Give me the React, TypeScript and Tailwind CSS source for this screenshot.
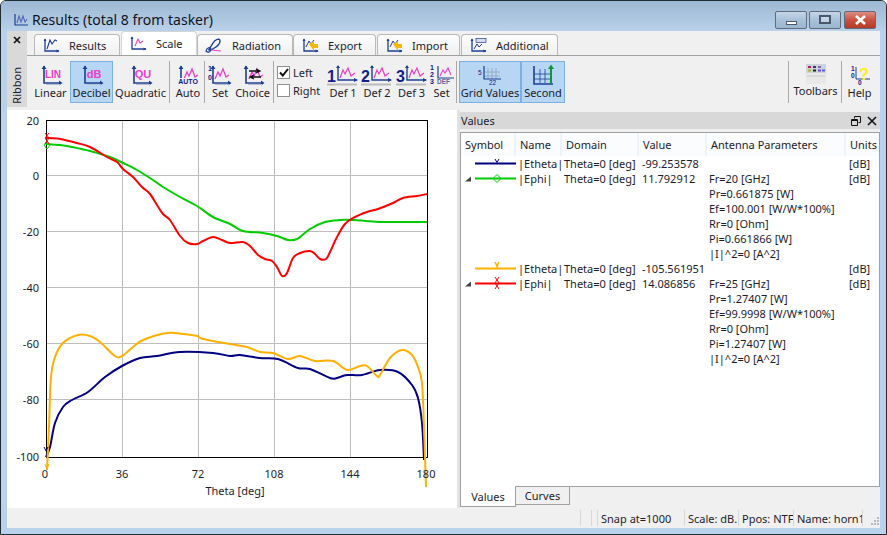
import type { ReactNode } from 'react'

const NAVY = '#1c3f94'
const PINK = '#e83ec8'

const RED = '46,138 60,139 77,143 90,147 107,157 117,162 123,169 133,177 142,187 150,194 157,205 163,214 170,220 180,236 188,243 197,244 203,241 213,237 222,240 230,243 243,242 250,246 258,255 265,259 272,261 277,267 282,276 287,273 293,258 300,253 310,251 315,254 320,259 326,259 330,252 337,237 345,224 355,217 367,212 378,209 393,203 403,198 417,196 427,194'
const GREEN = '46,144 60,145 72,147 90,151 110,157 123,163 137,170 153,180 163,187 180,197 197,206 213,217 230,224 243,231 263,233 277,236 288,240 297,239 310,229 325,222 340,220 353,220 366,221 380,222 400,222 427,222'
const ORANGE = '47,470 48,450 49,427 51,377 55,357 63,343 78,335 90,336 100,342 115,356 122,356 133,347 143,340 167,333 183,334 197,336 203,339 230,344 247,347 260,352 273,353 288,359 300,356 315,361 333,361 347,370 360,366 367,366 377,376 380,375 390,358 402,350 412,355 418,367 422,383 424,427 426,487'
const BLUE = '46,457 50,447 55,423 63,407 72,400 88,392 105,377 122,366 140,358 157,356 180,352 213,353 230,356 240,355 260,358 278,359 298,368 310,369 330,378 337,378 347,375 362,375 380,370 398,372 412,385 418,398 422,423 424,460'

// catmull-rom through the sampled points so the curves don't look like polygons
function smooth(points: string) {
  const p = points.split(' ').map(s => s.split(',').map(Number))
  let d = `M${p[0][0]} ${p[0][1]}`
  for (let i = 0; i < p.length - 1; i++) {
    const a = p[i - 1] ?? p[i]
    const b = p[i]
    const c = p[i + 1]
    const e = p[i + 2] ?? c
    const c1 = [b[0] + (c[0] - a[0]) / 6, b[1] + (c[1] - a[1]) / 6]
    const c2 = [c[0] - (e[0] - b[0]) / 6, c[1] - (e[1] - b[1]) / 6]
    d += `C${c1[0]} ${c1[1]} ${c2[0]} ${c2[1]} ${c[0]} ${c[1]}`
  }
  return d
}

// base graph used by nearly all ribbon icons
function Axes({ children, w = 24 }: { children?: ReactNode; w?: number }) {
  return (
    <svg width={w} height={22} viewBox={`0 0 ${w} 22`} className="shrink-0">
      <path d={`M5 2V19H${w - 2}`} fill="none" stroke={NAVY} strokeWidth="1.6" />
      <path d={`M2.5 5L5 1.5L7.5 5ZM${w - 4} 16.5L${w - 0.5} 19L${w - 4} 21.5Z`} fill={NAVY} />
      <path d={`M7 20.5H${w - 3}`} stroke="#b5bccb" strokeWidth="1" />
      {children}
    </svg>
  )
}

function Tag({ t, size = 10 }: { t: string; size?: number }) {
  return (
    <text x="14" y="14" textAnchor="middle" fontSize={size} fontWeight="700" fill={PINK} fontFamily="Liberation Sans, sans-serif">{t}</text>
  )
}

const Peak = ({ dx = 0 }: { dx?: number }) => (
  <path d="M7 15L10 8L12 12L15 5L18 13L21 11" transform={`translate(${dx} 0)`} fill="none" stroke={PINK} strokeWidth="1.3" />
)

function DefIcon({ n }: { n: string }) {
  return (
    <svg width="32" height="22" viewBox="0 0 32 22">
      <path d="M11 2V16H30" fill="none" stroke={NAVY} strokeWidth="1.4" />
      <path d="M9 4L11 1L13 4ZM27 14L31 16L27 18Z" fill={NAVY} />
      <path d="M13 14L16 6L18 10L21 4L24 12L28 9" fill="none" stroke={PINK} strokeWidth="1.2" />
      <path d="M0 20.5H30" stroke="#bbbbbb" strokeWidth="2" />
      <text x="0" y="18" fontSize="16" fontWeight="700" fill="#10208a" fontFamily="Liberation Sans, sans-serif">{n}</text>
    </svg>
  )
}

function SmallDigits() {
  return (
    <>
      <text x="0" y="7" fontSize="7" fontWeight="700" fill="#10208a" fontFamily="Liberation Sans, sans-serif">1</text>
      <text x="0" y="16" fontSize="7" fontWeight="700" fill="#10208a" fontFamily="Liberation Sans, sans-serif">0</text>
    </>
  )
}

function ToolButton({ label, icon, w, active }: { label: string; icon: ReactNode; w: number; active?: boolean }) {
  return (
    <div
      style={{ width: w }}
      className={'flex h-[42px] shrink-0 flex-col items-center justify-between border pt-[2px] pb-[4px] ' +
        (active ? 'border-[#7db0e2] bg-[#b6d6f4]' : 'border-transparent')}
    >
      <div className="flex h-[22px] items-start justify-center">{icon}</div>
      <span className="whitespace-nowrap leading-[14px]">{label}</span>
    </div>
  )
}

const Sep = ({ ml, mr }: { ml: string; mr: string }) => (
  <div className={`h-[42px] w-px shrink-0 bg-[#a9a9a9] ${ml} ${mr}`} />
)

function TabIcon({ kind }: { kind: string }) {
  return (
    <svg width="18" height="15" viewBox="0 0 18 15" className="shrink-0">
      <path d="M3 1V13H17" fill="none" stroke={NAVY} strokeWidth="1.3" />
      <path d="M1.5 3L3 0.5L4.5 3ZM14.5 11.5L17.5 13L14.5 14.5Z" fill={NAVY} />
      {kind === 'results' && <path d="M5 11L8 2L10 6L13 2L15 3" fill="none" stroke={NAVY} strokeWidth="1.1" />}
      {kind === 'scale' && <path d="M6 10L9 3L11 7L14 5" fill="none" stroke={PINK} strokeWidth="1.1" />}
      {kind === 'transfer' && (
        <>
          <path d="M5 9L8 3L10 6L13 2" fill="none" stroke={NAVY} strokeWidth="1" />
          <path d="M8 6L13 3V6H17V10H13V13Z" fill="#f2b900" />
        </>
      )}
      {kind === 'additional' && (
        <>
          <rect x="7" y="0.5" width="10" height="4" fill="#d6dcf0" stroke={NAVY} strokeWidth="0.7" />
          <path d="M5 11L8 6L10 9L13 6" fill="none" stroke={NAVY} strokeWidth="1" />
        </>
      )}
    </svg>
  )
}

const RadiationIcon = () => (
  <svg width="18" height="15" viewBox="0 0 18 15" className="shrink-0">
    <path d="M4 12C8 12 15 7 15 3C15 0 10 1 8 5C6 9 3 12 4 12Z" fill="none" stroke={NAVY} strokeWidth="1.4" />
    <path d="M1 13C2 9 5 9 6 11C6 14 3 15 1 13Z" fill="none" stroke={NAVY} strokeWidth="1.2" />
    <path d="M6 12L16 13" stroke={PINK} strokeWidth="1" />
  </svg>
)

function Tab({ label, w, gapTo, active, icon }: { label: string; w: number; gapTo: string; active?: boolean; icon: ReactNode }) {
  return (
    <div
      style={{ width: w }}
      className={`flex shrink-0 items-center gap-[9px] rounded-t-[4px] border border-b-0 pl-[7px] ${gapTo} ` +
        (active ? 'h-[24px] border-[#d4d4d4] bg-white' : 'h-[21px] border-[#b9b9b9] bg-gradient-to-b from-[#fdfdfd] to-[#f0f0f0]')}
    >
      {icon}
      <span className="leading-none">{label}</span>
    </div>
  )
}

function WinButton({ w, red, children }: { w: string; red?: boolean; children: ReactNode }) {
  return (
    <div
      className={`flex h-[18px] ${w} items-center justify-center rounded-[2px] border border-[#5d6b7d] ` +
        (red
          ? 'bg-gradient-to-b from-[#dc8d80] via-[#c9523f] to-[#b33c28]'
          : 'bg-gradient-to-b from-[#c6d6e6] via-[#a8c0d8] to-[#9cb6cf]')}
    >
      {children}
    </div>
  )
}

function Symbol({ color, marker, tree }: { color: string; marker: 'v' | 'd' | 'y' | 'x'; tree?: boolean }) {
  return (
    <svg width="55" height="15" viewBox="0 0 55 15" className="block">
      {tree && <path d="M4 10.5L10 10.5L10 5.5Z" fill="#444444" />}
      <path d="M14 7.5H56" stroke={color} strokeWidth="2" />
      {marker === 'v' && <path d="M34 3L36 6.5L38 3" fill="none" stroke={color} strokeWidth="1" />}
      {marker === 'd' && <path d="M36 3.5L40 7.5L36 11.5L32 7.5Z" fill="none" stroke={color} strokeWidth="1" />}
      {marker === 'y' && <path d="M34 1L36 5L38 1M36 5V7" fill="none" stroke={color} strokeWidth="1.5" />}
      {marker === 'x' && <path d="M34 1L38 7L34 13M38 1L34 7L38 13" fill="none" stroke={color} strokeWidth="1" />}
    </svg>
  )
}

const COLS = 'grid grid-cols-[55px_46px_77px_68px_139px_1fr]'

function Row({ symbol, name, value, params }: { symbol: ReactNode; name: string; value: string; params?: string[] }) {
  return (
    <div className={`${COLS} leading-[15px]`}>
      <div className="h-[15px] overflow-hidden">{symbol}</div>
      <div className="whitespace-nowrap pl-[2px]">{name}</div>
      <div className="whitespace-nowrap pl-[2px]">Theta=0 [deg]</div>
      <div className="whitespace-nowrap pl-[3px]">{value}</div>
      <div className="whitespace-nowrap pl-[2px]">
        {params?.map(p => <div key={p}>{p}</div>)}
      </div>
      <div className="pl-[3px]">[dB]</div>
    </div>
  )
}

function HeadCell({ label, last }: { label: string; last?: boolean }) {
  return (
    <div className={'overflow-hidden pl-[4px] leading-[23px] ' + (last ? '' : 'border-r-2 border-[#eef3f9]')}>{label}</div>
  )
}

function Plot() {
  const vLines = [122, 198, 274, 350]
  const hLines = [175, 231, 287, 343, 399]
  const yLabels: [string, number][] = [['20', 122], ['0', 177], ['-20', 233], ['-40', 289], ['-60', 345], ['-80', 401], ['-100', 458]]
  const xLabels: [string, number][] = [['0', 45], ['36', 122], ['72', 198], ['108', 274], ['144', 350], ['180', 426]]
  return (
    <svg width="450" height="398" viewBox="7 110 450 398" className="block bg-white">
      <g stroke="#bdbdbd" strokeWidth="1" shapeRendering="crispEdges">
        {vLines.map(x => <line key={x} x1={x + 0.5} y1="120" x2={x + 0.5} y2="457" />)}
        {hLines.map(y => <line key={y} x1="46" y1={y + 0.5} x2="427" y2={y + 0.5} />)}
      </g>
      <rect x="46.5" y="120.5" width="381" height="337" fill="none" stroke="#000000" strokeWidth="1" shapeRendering="crispEdges" />
      <path d={smooth(BLUE)} fill="none" stroke="#000080" strokeWidth="2" />
      <path d={smooth(ORANGE)} fill="none" stroke="#ffb000" strokeWidth="2" />
      <path d={smooth(GREEN)} fill="none" stroke="#00cc00" strokeWidth="2" />
      <path d={smooth(RED)} fill="none" stroke="#ff0000" strokeWidth="2" />
      <path d="M47 141L50 145L47 149L44 145Z" fill="none" stroke="#00cc00" strokeWidth="1" />
      <path d="M45 133L49 138L45 144M49 133L45 138L49 144" fill="none" stroke="#ff0000" strokeWidth="1" />
      <path d="M44 447L46 451L48 447" fill="none" stroke="#000080" strokeWidth="1" />
      <path d="M45 464L47 469L49 464" fill="none" stroke="#ffb000" strokeWidth="1" />
      <g fontSize="11" fill="#1c1c2c">
        {yLabels.map(([t, y]) => <text key={t} x="39" y={y + 3} textAnchor="end">{t}</text>)}
        {xLabels.map(([t, x]) => <text key={t} x={x} y="478" textAnchor="middle">{t}</text>)}
        <text x="235" y="495" textAnchor="middle">Theta [deg]</text>
      </g>
    </svg>
  )
}

export default function App() {
  return (
    <div className="flex h-[535px] w-[887px] flex-col overflow-hidden rounded-t-[6px] border border-[#1f2b33] bg-[#b9d1ea] px-[6px] pb-[6px] font-['Noto_Sans',sans-serif] text-[11px] text-[#1c1c2c]">
      {/* title bar */}
      <div className="-mx-[6px] flex h-[30px] shrink-0 items-center bg-gradient-to-b from-[#9db8d3] to-[#b9d1ea] pt-[7px] pr-[10px] pl-[12px]">
        <svg width="16" height="14" viewBox="0 0 16 14" className="mr-[3px] shrink-0">
          <path d="M2 1V12H15" fill="none" stroke={NAVY} strokeWidth="1.2" />
          <path d="M4 10L6 3L8 9L10 3L12 9L14 6" fill="none" stroke="#5566bb" strokeWidth="1.1" />
        </svg>
        <span className="text-[14px] leading-none text-[#10141c]">Results (total 8 from tasker)</span>
        <div className="ml-auto flex items-center gap-[2px]">
          <WinButton w="w-[32px]"><div className="mt-[6px] h-[4px] w-[11px] border border-[#49586a] bg-white" /></WinButton>
          <WinButton w="w-[32px]"><div className="h-[9px] w-[12px] border-2 border-[#49586a] bg-white/30" /></WinButton>
          <div className="ml-[1px]">
            <WinButton w="w-[32px]" red>
              <svg width="13" height="10" viewBox="0 0 13 10"><path d="M2 1L11 9M11 1L2 9" stroke="#ffffff" strokeWidth="2.6" /></svg>
            </WinButton>
          </div>
        </div>
      </div>

      <div className="flex min-h-0 flex-1 flex-col bg-[#f0f0f0]">
        {/* ribbon */}
        <div className="flex h-[76px] shrink-0">
          <div className="flex w-[20px] shrink-0 flex-col items-center bg-[#d9d9d9]">
            <svg width="10" height="10" viewBox="0 0 10 10" className="mt-[4px]"><path d="M2 2L8 8M8 2L2 8" stroke="#111111" strokeWidth="1.7" /></svg>
            <span className="mt-auto mb-[3px] leading-[14px] [writing-mode:vertical-rl] rotate-180">Ribbon</span>
          </div>
          <div className="flex min-w-0 flex-1 flex-col">
            <div className="flex h-[24px] shrink-0 items-end pl-[7px]">
              <Tab label="Results" w={86} gapTo="mr-px" icon={<TabIcon kind="results" />} />
              <Tab label="Scale" w={76} gapTo="" active icon={<TabIcon kind="scale" />} />
              <Tab label="Radiation" w={96} gapTo="" icon={<RadiationIcon />} />
              <Tab label="Export" w={83} gapTo="mr-px" icon={<TabIcon kind="transfer" />} />
              <Tab label="Import" w={83} gapTo="mr-px" icon={<TabIcon kind="transfer" />} />
              <Tab label="Additional" w={97} gapTo="" icon={<TabIcon kind="additional" />} />
            </div>
            <div className="flex h-[52px] items-center border-t border-[#a0a0a0] pl-[6px]">
              <ToolButton w={35} label="Linear" icon={<Axes><Tag t="LIN" /></Axes>} />
              <div className="w-[2px]" />
              <ToolButton w={43} label="Decibel" active icon={<Axes><Tag t="dB" size={11} /></Axes>} />
              <div className="w-[2px]" />
              <ToolButton w={51} label="Quadratic" icon={<Axes><Tag t="QU" size={11} /></Axes>} />
              <Sep ml="ml-[3px]" mr="mr-[3px]" />
              <ToolButton w={30} label="Auto" icon={
                <Axes><Peak dx={1} /><rect x="0" y="14" width="24" height="8" fill="#f0f0f0" /><text x="12" y="20" textAnchor="middle" fontSize="7" fontWeight="700" fill="#10208a" fontFamily="Liberation Sans, sans-serif">AUTO</text></Axes>
              } />
              <Sep ml="ml-px" mr="mr-[2px]" />
              <ToolButton w={26} label="Set" icon={<Axes><SmallDigits /><Peak /></Axes>} />
              <div className="w-[2px]" />
              <ToolButton w={35} label="Choice" icon={
                <Axes><Peak dx={1} /><path d="M8 7H19M15 5L19 7L15 9M20 13H9M13 11L9 13L13 15" fill="none" stroke="#111111" strokeWidth="1.3" /></Axes>
              } />
              <Sep ml="ml-[3px]" mr="mr-[3px]" />
              <div className="flex w-[50px] shrink-0 flex-col gap-[5px]">
                <label className="flex h-[13px] items-center gap-[3px] leading-none">
                  <span className="flex h-[13px] w-[13px] items-center justify-center border border-[#8e8f8f] bg-white">
                    <svg width="10" height="9" viewBox="0 0 10 9"><path d="M1 4.5L3.8 7.5L9 1" fill="none" stroke="#111111" strokeWidth="2" /></svg>
                  </span>
                  Left
                </label>
                <label className="flex h-[13px] items-center gap-[3px] leading-none">
                  <span className="h-[13px] w-[13px] border border-[#8e8f8f] bg-white" />
                  Right
                </label>
              </div>
              <ToolButton w={32} label="Def 1" icon={<DefIcon n="1" />} />
              <ToolButton w={36} label="Def 2" icon={<DefIcon n="2" />} />
              <ToolButton w={33} label="Def 3" icon={<DefIcon n="3" />} />
              <ToolButton w={27} label="Set" icon={
                <svg width="26" height="22" viewBox="0 0 26 22">
                  <path d="M9 2V14H25" fill="none" stroke={NAVY} strokeWidth="1.2" />
                  <path d="M11 12L14 6L16 9L19 4L22 11" fill="none" stroke={PINK} strokeWidth="1.1" />
                  <g fontSize="7" fontWeight="700" fill="#10208a" fontFamily="Liberation Sans, sans-serif">
                    <text x="1" y="6">1</text><text x="1" y="13">2</text><text x="1" y="20">3</text>
                    <text x="8" y="20" fontSize="6.5" fill="#666699">DEF</text>
                  </g>
                </svg>
              } />
              <Sep ml="ml-[1px]" mr="mr-[2px]" />
              <ToolButton w={62} label="Grid Values" active icon={
                <svg width="24" height="22" viewBox="0 0 24 22">
                  <path d="M10 4V15M14 4V15M18 4V15M6 8H22M6 12H22" stroke="#8fa2c0" strokeWidth="0.8" />
                  <path d="M6 2V15H23" fill="none" stroke={NAVY} strokeWidth="1.2" />
                  <text x="0" y="11" fontSize="6.5" fill="#10208a" fontFamily="Liberation Sans, sans-serif">5</text>
                  <text x="11" y="21" fontSize="6.5" fill="#10208a" fontFamily="Liberation Sans, sans-serif">22</text>
                </svg>
              } />
              <ToolButton w={44} label="Second" active icon={
                <svg width="24" height="22" viewBox="0 0 24 22">
                  <path d="M9 5V19M14 5V19M3 10H20M3 15H20" stroke="#1c3f94" strokeWidth="0.8" />
                  <path d="M3 2V20H22" fill="none" stroke={NAVY} strokeWidth="1.6" />
                  <path d="M20 20V3" stroke="#0a9a2a" strokeWidth="2" />
                  <path d="M17 5L20 0.5L23 5Z" fill="#0a9a2a" />
                </svg>
              } />
              <div className="flex-1" />
              <Sep ml="" mr="mr-[3px]" />
              <ToolButton w={47} label="Toolbars" icon={
                <svg width="20" height="20" viewBox="0 0 20 20">
                  <rect x="0" y="0" width="20" height="20" rx="1" fill="#e8e8e8" />
                  <rect x="0" y="0" width="20" height="9" fill="#cdd3da" />
                  <path d="M1 12H19" stroke="#c8c8c8" />
                  <rect x="2" y="2" width="3" height="2" fill="#a0245f" /><rect x="7" y="2" width="3" height="2" fill="#4a2a78" /><rect x="12" y="2" width="3" height="2" fill="#806ca8" /><rect x="16" y="2" width="3" height="2" fill="#bcd8ee" />
                  <rect x="2" y="5.5" width="3" height="2" fill="#a8b838" /><rect x="7" y="5.5" width="3" height="2" fill="#202020" /><rect x="12" y="5.5" width="3" height="2" fill="#6a4ad0" /><rect x="16" y="5.5" width="3" height="2" fill="#5a5af0" />
                </svg>
              } />
              <div className="w-[2px]" />
              <Sep ml="" mr="mr-[2px]" />
              <ToolButton w={31} label="Help" icon={
                <svg width="24" height="22" viewBox="0 0 24 22">
                  <g fontSize="6.5" fontWeight="700" fill="#10208a" fontFamily="Liberation Sans, sans-serif">
                    <text x="3" y="7">1</text><text x="3" y="14">0</text><text x="10" y="21">0</text>
                  </g>
                  <path d="M8 3V15H22" fill="none" stroke={NAVY} strokeWidth="1" />
                  <text x="16" y="16" textAnchor="middle" fontSize="17" fontWeight="700" fill="#ffee22" fontFamily="Liberation Sans, sans-serif">?</text>
                </svg>
              } />
              <div className="w-[5px]" />
            </div>
          </div>
        </div>

        {/* plot + values */}
        <div className="flex h-[401px] shrink-0">
          <div className="w-[450px] shrink-0 pt-[3px]">
            <Plot />
          </div>
          <div className="mt-[3px] w-[3px] shrink-0 bg-[#e2e2e2]" />
          <div className="flex min-w-0 flex-1 flex-col pt-[5px]">
            <div className="flex h-[17px] shrink-0 items-center bg-[#d8d8d8] pr-[3px] pl-px">
              <span className="leading-none">Values</span>
              <svg width="10" height="10" viewBox="0 0 10 10" className="mr-[6px] ml-auto"><path d="M3.5 2.5V.5H9.5V6.5H7.5M.5 3.5H6.5V9.5H.5ZM.5 4.5H6.5" fill="none" stroke="#111111" /></svg>
              <svg width="10" height="10" viewBox="0 0 10 10"><path d="M1 1L9 9M9 1L1 9" stroke="#111111" strokeWidth="1.6" /></svg>
            </div>
            <div className="mt-[3px] h-[355px] shrink-0 overflow-hidden border border-[#a0a0a0] bg-white">
              <div className={`${COLS} h-[23px] bg-[#fafcfe]`}>
                <HeadCell label="Symbol" />
                <HeadCell label="Name" />
                <HeadCell label="Domain" />
                <HeadCell label="Value" />
                <HeadCell label="Antenna Parameters" />
                <HeadCell label="Units" last />
              </div>
              <Row symbol={<Symbol color="#000080" marker="v" />} name="|Etheta|" value="-99.253578" />
              <Row
                symbol={<Symbol color="#00cc00" marker="d" tree />}
                name="|Ephi|"
                value="11.792912"
                params={['Fr=20 [GHz]', 'Pr=0.661875 [W]', 'Ef=100.001 [W/W*100%]', 'Rr=0 [Ohm]', 'Pi=0.661866 [W]', '|I|^2=0 [A^2]']}
              />
              <Row symbol={<Symbol color="#ffb000" marker="y" />} name="|Etheta|" value="-105.561951" />
              <Row
                symbol={<Symbol color="#ff0000" marker="x" tree />}
                name="|Ephi|"
                value="14.086856"
                params={['Fr=25 [GHz]', 'Pr=1.27407 [W]', 'Ef=99.9998 [W/W*100%]', 'Rr=0 [Ohm]', 'Pi=1.27407 [W]', '|I|^2=0 [A^2]']}
              />
            </div>
            <div className="flex h-[20px] shrink-0 items-start">
              <div className="-mt-px flex h-[21px] w-[56px] items-center justify-center border border-t-0 border-[#a0a0a0] bg-white leading-none">Values</div>
              <div className="flex h-[18px] w-[54px] items-center justify-center border border-l-0 border-t-0 border-[#a0a0a0] leading-none">Curves</div>
            </div>
          </div>
        </div>

        {/* status bar */}
        <div className="flex min-h-0 flex-1 items-center whitespace-nowrap">
          <div className="ml-[573px] h-[16px] w-px bg-[#d8d8d8]" />
          <div className="ml-[10px] h-[16px] w-px bg-[#d8d8d8]" />
          <div className="ml-[5px] h-[16px] w-px bg-[#d8d8d8]" />
          <span className="ml-[3px] w-[83px] leading-none">Snap at=1000</span>
          <div className="h-[16px] w-px bg-[#d8d8d8]" />
          <span className="ml-[3px] w-[50px] leading-none">Scale: dB.</span>
          <div className="h-[16px] w-px bg-[#d8d8d8]" />
          <span className="ml-[3px] w-[51px] leading-none">Ppos: NTF</span>
          <div className="h-[16px] w-px bg-[#d8d8d8]" />
          <span className="ml-[3px] w-[65px] leading-none">Name: horn1</span>
          <div className="h-[16px] w-px bg-[#d8d8d8]" />
          <svg width="10" height="10" viewBox="0 0 10 10" className="mt-[6px] ml-[7px]">
            <path d="M7 1h2v2h-2zM4 4h2v2h-2zM7 4h2v2h-2zM1 7h2v2h-2zM4 7h2v2h-2zM7 7h2v2h-2z" fill="#b8b8b8" />
          </svg>
        </div>
      </div>
    </div>
  )
}
